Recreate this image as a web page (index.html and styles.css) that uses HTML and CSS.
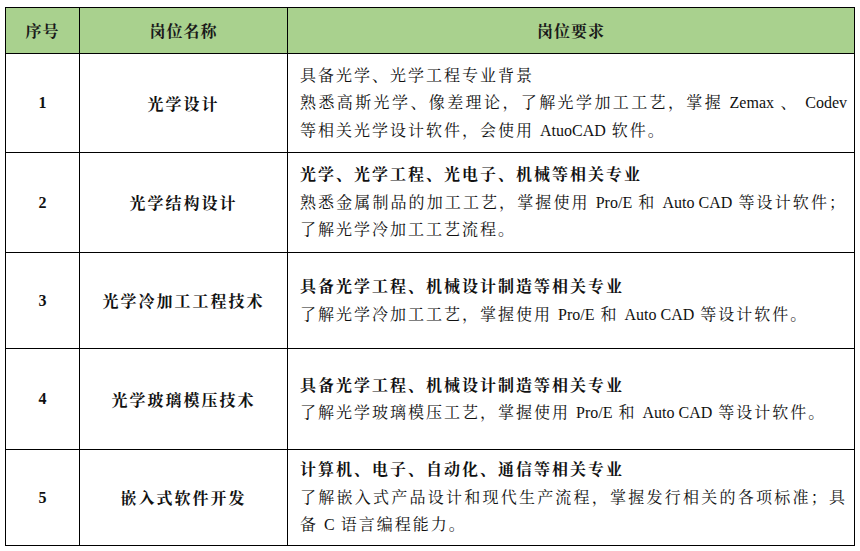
FILE: index.html
```html
<!DOCTYPE html>
<html lang="zh-CN">
<head>
<meta charset="utf-8">
<link rel="stylesheet" href="styles.css">
</head>
<body>
<table class="jobs">
  <colgroup>
    <col class="c-no">
    <col class="c-name">
    <col class="c-req">
  </colgroup>
  <thead>
    <tr class="head">
      <th>序号</th>
      <th>岗位名称</th>
      <th>岗位要求</th>
    </tr>
  </thead>
  <tbody>
    <tr class="r1">
      <td class="no">1</td>
      <td class="name">光学设计</td>
      <td class="req">
        <span class="ln">具备光学、光学工程专业背景</span>
        <span class="ln full">熟悉高斯光学、像差理论，了解光学加工工艺，掌握 <span class="en">Zemax</span> 、 <span class="en">Codev</span></span>
        <span class="ln">等相关光学设计软件，会使用 <span class="en">AtuoCAD</span> 软件。</span>
      </td>
    </tr>
    <tr class="r2">
      <td class="no">2</td>
      <td class="name">光学结构设计</td>
      <td class="req">
        <span class="ln b">光学、光学工程、光电子、机械等相关专业</span>
        <span class="ln full">熟悉金属制品的加工工艺，掌握使用 <span class="en">Pro/E</span> 和 <span class="en">Auto CAD</span> 等设计软件；</span>
        <span class="ln">了解光学冷加工工艺流程。</span>
      </td>
    </tr>
    <tr class="r3">
      <td class="no">3</td>
      <td class="name">光学冷加工工程技术</td>
      <td class="req">
        <span class="ln b">具备光学工程、机械设计制造等相关专业</span>
        <span class="ln">了解光学冷加工工艺，掌握使用 <span class="en">Pro/E</span> 和 <span class="en">Auto CAD</span> 等设计软件。</span>
      </td>
    </tr>
    <tr class="r4">
      <td class="no">4</td>
      <td class="name">光学玻璃模压技术</td>
      <td class="req">
        <span class="ln b">具备光学工程、机械设计制造等相关专业</span>
        <span class="ln">了解光学玻璃模压工艺，掌握使用 <span class="en">Pro/E</span> 和 <span class="en">Auto CAD</span> 等设计软件。</span>
      </td>
    </tr>
    <tr class="r5">
      <td class="no">5</td>
      <td class="name">嵌入式软件开发</td>
      <td class="req">
        <span class="ln b">计算机、电子、自动化、通信等相关专业</span>
        <span class="ln full">了解嵌入式产品设计和现代生产流程，掌握发行相关的各项标准；具</span>
        <span class="ln">备 <span class="en">C</span> 语言编程能力。</span>
      </td>
    </tr>
  </tbody>
</table>
</body>
</html>
```
FILE: styles.css
```css
html, body {
  margin: 0;
  padding: 0;
  background: #ffffff;
}

body {
  font-family: "Liberation Serif", "Noto Serif CJK SC", "Noto Sans CJK SC", serif;
  font-size: 16px;
  color: #111111;
}

.jobs {
  border-collapse: collapse;
  table-layout: fixed;
  width: 849px;
  margin: 7px 0 0 5px;
}

.c-no { width: 74px; }
.c-name { width: 208px; }
.c-req { width: 567px; }

.jobs th,
.jobs td {
  border: 1px solid #000000;
  vertical-align: middle;
  padding: 0;
}

.head th {
  background: #a9d18e;
  height: 45px;
  font-weight: bold;
  letter-spacing: 1px;
  text-align: center;
  color: #1a1a1a;
}

.r1 td { height: 98px; }
.r2 td { height: 99px; }
.r3 td { height: 95px; }
.r4 td { height: 100px; }
.r5 td { height: 95px; }

.no {
  text-align: center;
  font-weight: bold;
}

.name {
  text-align: center;
  font-weight: bold;
  letter-spacing: 2px;
}

.req {
  padding: 0 7px 0 12px !important;
  letter-spacing: 2px;
  line-height: 27.5px;
}

.ln {
  display: block;
  white-space: nowrap;
  text-align: left;
}

.ln.b {
  font-weight: bold;
}

.ln.full {
  text-align: justify;
  text-align-last: justify;
}

.en {
  letter-spacing: 0;
}
```
